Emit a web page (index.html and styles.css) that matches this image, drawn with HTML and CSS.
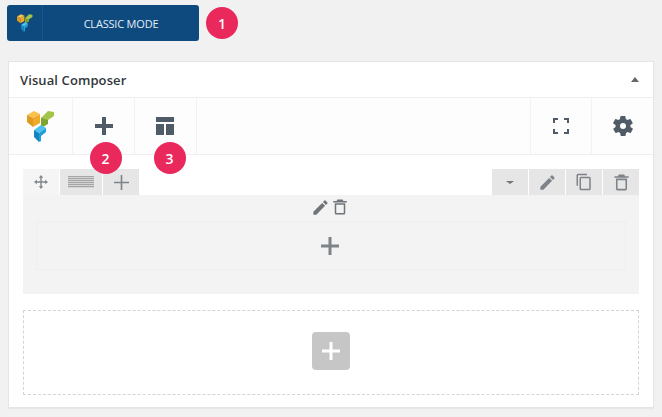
FILE: index.html
```html
<!DOCTYPE html>
<html lang="en">
<head>
<meta charset="utf-8">
<title>Visual Composer</title>
<link rel="stylesheet" href="styles.css">
</head>
<body>
<div class="top">
  <button class="mode">
    <span class="mode-logo">
      <svg width="16" height="18" viewBox="0 0 28 31">
        <polygon points="0,4 7,0 13,3 6,7" fill="#f8c24c"/>
        <polygon points="0,4 6,7 6,16 0,11" fill="#e09a1e"/>
        <polygon points="6,7 13,3 13,12 6,16" fill="#f0a92b"/>
        <polygon points="14,7 21,3 21,13 14,17" fill="#7fa332"/>
        <polygon points="14,7 21,0 27,1 27,5 21,9" fill="#a3c64a"/>
        <polygon points="7,19 14,14 19,17 12,22" fill="#4cc0ee"/>
        <polygon points="7,19 12,22 12,31 7,26" fill="#1583bd"/>
        <polygon points="12,22 19,17 19,21 14,25 14,30 12,31" fill="#1f9fd8"/>
      </svg>
    </span>
    <span class="mode-label">CLASSIC MODE</span>
  </button>
  <span class="badge">1</span>
</div>
<section class="panel">
  <header class="panel-head">
    <h2>Visual Composer</h2>
    <span class="caret"></span>
  </header>
  <nav class="toolbar">
    <div class="tool tool-logo">
      <svg width="28" height="31" viewBox="0 0 28 31">
        <polygon points="0,4 7,0 13,3 6,7" fill="#f8c24c"/>
        <polygon points="0,4 6,7 6,16 0,11" fill="#e09a1e"/>
        <polygon points="6,7 13,3 13,12 6,16" fill="#f0a92b"/>
        <polygon points="14,7 21,3 21,13 14,17" fill="#7fa332"/>
        <polygon points="14,7 21,0 27,1 27,5 21,9" fill="#a3c64a"/>
        <polygon points="7,19 14,14 19,17 12,22" fill="#4cc0ee"/>
        <polygon points="7,19 12,22 12,31 7,26" fill="#1583bd"/>
        <polygon points="12,22 19,17 19,21 14,25 14,30 12,31" fill="#1f9fd8"/>
      </svg>
    </div>
    <div class="tool tool-add">
      <svg width="18" height="18" viewBox="0 0 18 18"><path d="M7 0h4v7h7v4h-7v7H7v-7H0V7h7z" fill="#4f5b66"/></svg>
      <span class="badge badge-over badge-two">2</span>
    </div>
    <div class="tool tool-layout">
      <svg width="18" height="18" viewBox="0 0 18 18"><path d="M0 0h18v5H0zM0 7h8v11H0zM10 7h8v11h-8z" fill="#4f5b66"/></svg>
      <span class="badge badge-over badge-three">3</span>
    </div>
    <div class="spacer"></div>
    <div class="tool tool-full">
      <svg width="16" height="16" viewBox="0 0 16 16"><path d="M1 5V1h4M11 1h4v4M15 11v4h-4M5 15H1v-4" fill="none" stroke="#4f5b66" stroke-width="2"/></svg>
    </div>
    <div class="tool tool-gear">
      <svg width="24" height="24" viewBox="0 0 24 24"><path d="M19.4 13a7.5 7.5 0 0 0 0-2l2.1-1.6a.5.5 0 0 0 .1-.7l-2-3.4a.5.5 0 0 0-.6-.2l-2.5 1a7.3 7.3 0 0 0-1.700-1l-.4-2.700a.5.5 0 0 0-.5-.4h-4a.5.5 0 0 0-.5.4l-.4 2.700a7.3 7.3 0 0 0-1.700 1l-2.500-1a.5.5 0 0 0-.6.2l-2 3.400a.5.5 0 0 0 .1.700L4.600 11a7.500 7.500 0 0 0 0 2l-2.100 1.600a.5.5 0 0 0-.1.700l2 3.400c.1.2.4.3.6.2l2.500-1c.5.4 1.100.7 1.700 1l.4 2.700c0 .2.3.4.5.4h4c.2 0 .5-.2.5-.4l.4-2.700c.6-.3 1.200-.6 1.700-1l2.500 1c.2.1.5 0 .6-.2l2-3.400a.5.5 0 0 0-.1-.700zM12 15a3 3 0 1 1 0-6 3 3 0 0 1 0 6z" fill="#4f5b66"/></svg>
    </div>
  </nav>
  <div class="canvas">
    <div class="row">
      <div class="row-bar">
        <div class="ctl ctl-move">
          <svg width="14" height="14" viewBox="0 0 14 14"><path d="M7 0l2.200 2.800H7.700v3.500h3.500V4.800L14 7l-2.800 2.200V7.700H7.700v3.500h1.500L7 14l-2.200-2.800h1.500V7.700H2.800v1.500L0 7l2.800-2.200v1.500h3.500V2.800H4.800z" fill="#7f858a"/></svg>
        </div>
        <div class="ctl ctl-lines"><span class="lines"></span></div>
        <div class="ctl ctl-plus">
          <svg width="15" height="15" viewBox="0 0 15 15"><path d="M6.700 0h1.600v6.700H15v1.600H8.300V15H6.700V8.300H0V6.700h6.700z" fill="#7d8388"/></svg>
        </div>
        <div class="spacer"></div>
        <div class="ctl"><span class="drop"></span></div>
        <div class="ctl">
          <svg width="19" height="19" viewBox="0 0 24 24"><path d="M3 17.250V21h3.750L17.810 9.940l-3.750-3.750zM20.710 7.040a1 1 0 0 0 0-1.410l-2.340-2.340a1 1 0 0 0-1.410 0l-1.830 1.830 3.750 3.750z" fill="#7d8388"/></svg>
        </div>
        <div class="ctl">
          <svg width="18" height="18" viewBox="0 0 24 24"><path d="M16 1H4a2 2 0 0 0-2 2v14h2V3h12zm3 4H8a2 2 0 0 0-2 2v14a2 2 0 0 0 2 2h11a2 2 0 0 0 2-2V7a2 2 0 0 0-2-2zm0 16H8V7h11z" fill="#7d8388"/></svg>
        </div>
        <div class="ctl">
          <svg width="19" height="19" viewBox="0 0 24 24"><path d="M15.500 2l1 2H21v2H3V4h4.500l1-2zM5 7h14v13a2 2 0 0 1-2 2H7a2 2 0 0 1-2-2zm2 2v11h10V9z" fill="#7d8388"/></svg>
        </div>
      </div>
      <div class="row-body">
        <div class="col-ctl">
          <svg width="19" height="19" viewBox="0 0 24 24"><path d="M3 17.250V21h3.750L17.810 9.940l-3.750-3.750zM20.710 7.040a1 1 0 0 0 0-1.410l-2.340-2.340a1 1 0 0 0-1.410 0l-1.830 1.830 3.750 3.750z" fill="#6f757a"/></svg>
          <svg width="18" height="18" viewBox="0 0 24 24"><path d="M15.500 2l1 2H21v2H3V4h4.500l1-2zM5 7h14v13a2 2 0 0 1-2 2H7a2 2 0 0 1-2-2zm2 2v11h10V9z" fill="#6f757a"/></svg>
        </div>
        <div class="col-slot">
          <svg width="18" height="18" viewBox="0 0 18 18"><path d="M7.500 0h3v7.500H18v3h-7.500V18h-3v-7.500H0v-3h7.500z" fill="#7d8388"/></svg>
        </div>
      </div>
    </div>
    <div class="add-row">
      <span class="add-btn">
        <svg width="18" height="18" viewBox="0 0 18 18"><path d="M7.500 0h3v7.500H18v3h-7.500V18h-3v-7.500H0v-3h7.500z" fill="#fff"/></svg>
      </span>
    </div>
  </div>
</section>
</body>
</html>
```
FILE: styles.css
```css
* { box-sizing: border-box; }
html, body { margin: 0; height: 100%; }
body {
  background: #f1f1f1;
  font-family: "Open Sans", sans-serif;
  color: #32373c;
  width: 662px;
  height: 417px;
  overflow: hidden;
  padding: 5px 8px 0 7px;
}
.top { display: flex; align-items: center; gap: 7px; height: 36px; }
.mode {
  display: flex;
  align-items: stretch;
  width: 192px;
  height: 36px;
  padding: 0;
  border: 0;
  border-radius: 3px;
  background: #0f4a7e;
  color: #e3eef6;
  font-family: inherit;
}
.mode-logo {
  width: 36px;
  display: flex;
  align-items: center;
  justify-content: center;
  border-right: 1px solid #1b5688;
}
.mode-label {
  flex: 1;
  align-self: center;
  font-size: 11px;
  text-align: center;
  letter-spacing: -0.2px;
}
.badge {
  width: 32px;
  height: 32px;
  border-radius: 50%;
  background: #e9285c;
  color: #fff;
  font-size: 14px;
  font-weight: 600;
  display: flex;
  align-items: center;
  justify-content: center;
  flex: none;
}
.badge-over {
  position: absolute;
  left: 50%;
  bottom: -20px;
  z-index: 2;
}
.badge-two { margin-left: -14px; }
.badge-three { margin-left: -12px; }
.panel {
  margin: 20px 0 0 1px;
  width: 646px;
  height: 347px;
  background: #fff;
  border: 1px solid #e5e5e5;
  box-shadow: 0 1px 1px rgba(0,0,0,.04);
  display: flex;
  flex-direction: column;
}
.panel-head {
  height: 36px;
  display: flex;
  align-items: center;
  justify-content: space-between;
  padding: 0 14px 0 11px;
  border-bottom: 1px solid #eeeeee;
  flex: none;
}
.panel-head h2 {
  margin: 0;
  font-size: 13px;
  font-weight: 600;
  letter-spacing: 0.1px;
  color: #32373c;
}
.caret {
  width: 0;
  height: 0;
  border-left: 4px solid transparent;
  border-right: 4px solid transparent;
  border-bottom: 5px solid #666;
}
.toolbar {
  display: flex;
  height: 57px;
  flex: none;
  background: #fdfdfd;
  border-bottom: 1px solid #efefef;
}
.tool {
  position: relative;
  display: flex;
  align-items: center;
  justify-content: center;
  border-right: 1px solid #f2f2f2;
}
.tool-logo { width: 64px; }
.tool-add { width: 62px; }
.tool-layout { width: 62px; padding-right: 2px; }
.tool-full { width: 62px; border-left: 1px solid #f2f2f2; }
.tool-gear { width: 61px; border-right: 0; }
.spacer { flex: 1; }
.canvas {
  flex: 1;
  padding: 14px 14px 13px;
  display: flex;
  flex-direction: column;
  gap: 15px;
}
.row { display: flex; flex-direction: column; }
.row-bar { display: flex; gap: 1px; height: 26px; }
.ctl {
  width: 36px;
  background: #e6e6e6;
  display: flex;
  align-items: center;
  justify-content: center;
}
.ctl-move { background: #f5f5f5; }
.ctl-lines { width: 42px; }
.lines {
  width: 26px;
  height: 12px;
  background: repeating-linear-gradient(#a6a6a6 0 1px, #d2d2d2 1px 2px);
}
.drop {
  width: 0;
  height: 0;
  border-left: 4px solid transparent;
  border-right: 4px solid transparent;
  border-top: 3px solid #6f757a;
}
.row-body {
  height: 99px;
  background: #f3f3f3;
  padding: 0 13px;
  display: flex;
  flex-direction: column;
}
.col-ctl {
  height: 26px;
  display: flex;
  align-items: center;
  justify-content: center;
  gap: 1px;
  padding: 0 2px 2px 0;
}
.col-slot {
  height: 49px;
  border: 1px solid #eeeeee;
  display: flex;
  align-items: center;
  justify-content: center;
  padding-right: 2px;
}
.add-row {
  height: 85px;
  margin-top: 1px;
  border: 1px dashed #d4d4d4;
  display: flex;
  align-items: center;
  justify-content: center;
  padding-bottom: 4px;
}
.add-btn {
  width: 38px;
  height: 38px;
  border-radius: 4px;
  background: #c6c6c6;
  display: flex;
  align-items: center;
  justify-content: center;
}
```
